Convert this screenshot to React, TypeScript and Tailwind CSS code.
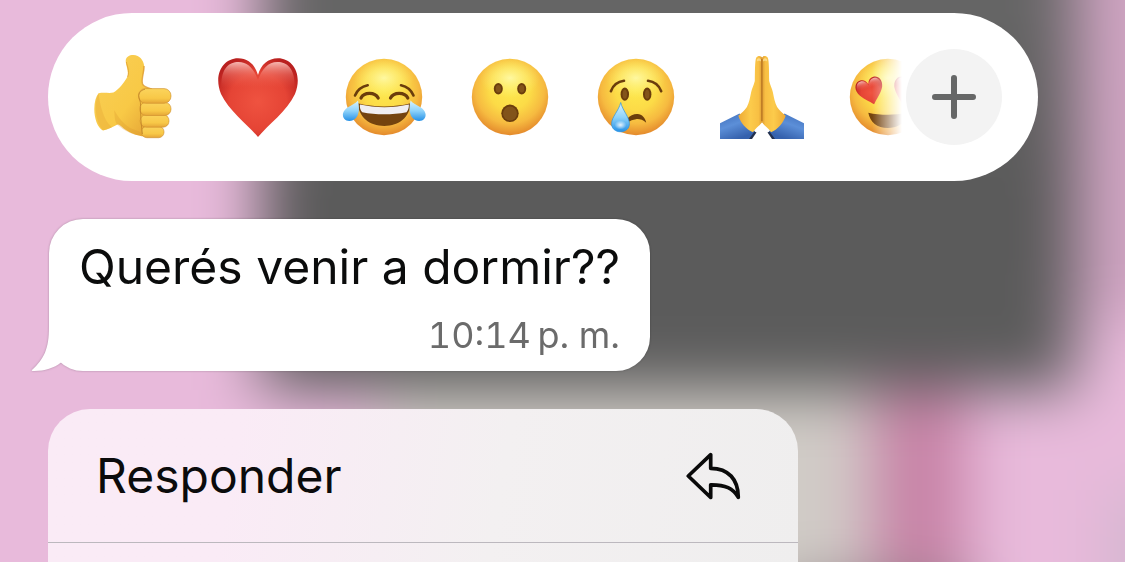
import type { ReactNode } from "react";

const FACE = "url(#face)";
const BROWN = "#6b3d0c";

function Emoji({ children }: { children: ReactNode }) {
  return (
    <svg viewBox="0 0 84 84" className="size-[84px]" aria-hidden="true">
      {children}
    </svg>
  );
}

function Face() {
  return (
    <>
      <circle cx="42" cy="42" r="38.2" fill={FACE} />
      <ellipse cx="42" cy="23" rx="30" ry="20" fill="url(#gloss)" />
    </>
  );
}

function SharedPaints() {
  return (
    <svg className="absolute size-0" aria-hidden="true">
      <defs>
        <radialGradient id="face" cx="0.5" cy="0.4" r="0.6">
          <stop offset="0" stopColor="#fde94e" />
          <stop offset="0.45" stopColor="#fcdb47" />
          <stop offset="0.75" stopColor="#f6ba40" />
          <stop offset="1" stopColor="#e48a2c" />
        </radialGradient>
        <radialGradient id="gloss">
          <stop offset="0" stopColor="#fffcb0" stopOpacity="0.85" />
          <stop offset="1" stopColor="#fff27a" stopOpacity="0" />
        </radialGradient>
        <radialGradient id="heart" cx="0.5" cy="0.55" r="0.6">
          <stop offset="0" stopColor="#ef5340" />
          <stop offset="0.6" stopColor="#e54435" />
          <stop offset="1" stopColor="#b9201f" />
        </radialGradient>
        <linearGradient id="shine" x1="0" y1="0" x2="0" y2="1">
          <stop offset="0" stopColor="#ffd0ca" stopOpacity="0.85" />
          <stop offset="0.5" stopColor="#f78a7d" stopOpacity="0.4" />
          <stop offset="1" stopColor="#f0604f" stopOpacity="0" />
        </linearGradient>
        <linearGradient id="tear" x1="0" y1="0" x2="0" y2="1">
          <stop offset="0" stopColor="#d9f3ff" />
          <stop offset="0.5" stopColor="#8fd3fa" />
          <stop offset="1" stopColor="#2590e6" />
        </linearGradient>
        <radialGradient id="tearShine">
          <stop offset="0" stopColor="#ffffff" stopOpacity="0.85" />
          <stop offset="1" stopColor="#ffffff" stopOpacity="0" />
        </radialGradient>
        <linearGradient id="skin" x1="0" y1="0" x2="1" y2="1">
          <stop offset="0" stopColor="#f9cf57" />
          <stop offset="0.6" stopColor="#f8c946" />
          <stop offset="1" stopColor="#e3a033" />
        </linearGradient>
        <linearGradient id="finger" x1="0" y1="0" x2="0" y2="1">
          <stop offset="0" stopColor="#fbd45c" />
          <stop offset="0.65" stopColor="#f8c847" />
          <stop offset="1" stopColor="#e5a637" />
        </linearGradient>
        <linearGradient id="palmLeft" x1="0" y1="0" x2="1" y2="0">
          <stop offset="0" stopColor="#eda935" />
          <stop offset="0.5" stopColor="#fccb4b" />
          <stop offset="0.85" stopColor="#f8bf43" />
          <stop offset="1" stopColor="#db9730" />
        </linearGradient>
        <linearGradient id="sleeve" x1="0" y1="0" x2="0.5" y2="1">
          <stop offset="0" stopColor="#3e6dba" />
          <stop offset="0.5" stopColor="#5c8fd8" />
          <stop offset="1" stopColor="#3561ad" />
        </linearGradient>
      </defs>
    </svg>
  );
}

function ThumbsUp() {
  return (
    <Emoji>
      <path
        d="M8.5 38.2C14 37.2 19 38.4 23.4 37.6C29 34 34 28 37.5 21.5C39 17 35.8 10 35.7 6C35.8 2 39.5 0 43.5 0.1C49.5 0.5 53.5 5 54.2 11C54.6 17.5 51 23.5 52.5 28.8C54 32.5 58 33 62 34L58 81.8C50 81.6 41 79 34 73.8C31.5 71.5 29.5 68.8 27.5 69.5C23 72 18 74.5 13 75.5C7.5 73 4.2 63 4.3 54C4.4 47 5.8 41.5 8.5 38.2Z"
        fill="url(#skin)"
      />
      <path d="M8.5 38.5C4.5 46 4 65 13 75.3C16 75 19 73.5 22 72.3C13 65 10 49 8.5 38.5Z" fill="#e8ac3a" opacity="0.45" />
      <path d="M27 69.5C24 65 25 59 24 55C28 61 31 67 40 73L58 80C45 82 36 77 27 69.5Z" fill="#dc9930" opacity="0.3" />
      <path d="M36.4 7C37 11 40 16 37.6 22" fill="none" stroke="#dd9a30" strokeWidth="1" opacity="0.7" />
      <path d="M54 11C54.3 17.5 51 23.5 52.5 28.8C54 32.5 58 33 62 34" fill="none" stroke="#dd9a30" strokeWidth="1.4" opacity="0.8" />
      <rect x="51.5" y="71.3" width="22.5" height="11.4" rx="5.4" fill="url(#finger)" stroke="#cc8b2b" strokeWidth="0.6" />
      <rect x="50.2" y="59.6" width="28.8" height="12.6" rx="6" fill="url(#finger)" stroke="#cc8b2b" strokeWidth="0.6" />
      <rect x="49.8" y="47.3" width="31.2" height="13.2" rx="6.3" fill="url(#finger)" stroke="#cc8b2b" strokeWidth="0.6" />
      <rect x="48.5" y="33.6" width="32.5" height="14.7" rx="7" fill="url(#finger)" stroke="#cc8b2b" strokeWidth="0.6" />
      <path d="M55 34.2C50 35.5 47.5 39 49.5 44C51.5 49 50 54 50.7 59C51 66 51.5 73 52.5 79" fill="none" stroke="#b97a24" strokeWidth="1" opacity="0.7" />
    </Emoji>
  );
}

function HeartShape() {
  return (
    <>
      <path d="M42 82C32 70 13 56 5 39C-3 19 7.5 3.3 22 3.3C32 3.3 39 9.5 42 20C45 9.5 52 3.3 62 3.3C76.5 3.3 87 19 79 39C71 56 52 70 42 82Z" fill="url(#heart)" />
      <path d="M5.5 33C4.5 14 12.5 7 22.5 7C32 7 38 14 42 25C46 14 52 7 61.5 7C71.5 7 79.5 14 78.5 33Z" fill="url(#shine)" />
    </>
  );
}

function Joy() {
  return (
    <Emoji>
      <Face />
      <path d="M13 40.5C15.5 34.5 20 31.5 25.7 30.3M59 30.3C64.5 31.5 69 34.5 71.5 40.5" fill="none" stroke={BROWN} strokeWidth="2.6" strokeLinecap="round" />
      <path d="M19 43C22 36.8 33 36.8 36.2 43M48.5 43C51.7 36.8 62.7 36.8 65.8 43" fill="none" stroke={BROWN} strokeWidth="3.2" strokeLinecap="round" />
      <path d="M16 48.3C31 52.5 53 52.5 68.5 48.3C68 62 57 71 42.3 71C27.5 71 16.5 62 16 48.3Z" fill="#74430e" />
      <path d="M18 49.6C33 53 52 53 66.8 49.6C67.2 52 66 56 64.5 57.3C50 60 34 60 20.3 57.3C18.5 56 17.5 52 18 49.6Z" fill="#f0eef1" />
      <path d="M16 45.5C17.5 53 17.3 58 14.7 62C11.5 66.8 5 67.2 2.2 63.8C-1 59.5 2 54.5 6.5 52C10 50 13.5 48.3 16 45.5Z" fill="url(#tear)" />
      <path d="M68.5 45.5C67 53 67.2 58 69.8 62C73 66.8 79.5 67.2 82.3 63.8C85.5 59.5 82.5 54.5 78 52C74.5 50 71 48.3 68.5 45.5Z" fill="url(#tear)" />
    </Emoji>
  );
}

function Astonished() {
  return (
    <Emoji>
      <Face />
      <ellipse cx="30.3" cy="33.8" rx="4.5" ry="5.7" fill={BROWN} />
      <ellipse cx="53.7" cy="33.8" rx="4.5" ry="5.7" fill={BROWN} />
      <ellipse cx="30.3" cy="33.8" rx="2.6" ry="3.8" fill="#83541a" />
      <ellipse cx="53.7" cy="33.8" rx="2.6" ry="3.8" fill="#83541a" />
      <circle cx="42" cy="58.3" r="8.7" fill={BROWN} />
      <circle cx="42" cy="58.6" r="7" fill="#82531a" />
    </Emoji>
  );
}

function Crying() {
  return (
    <Emoji>
      <Face />
      <ellipse cx="30.8" cy="39.2" rx="4.2" ry="6.6" fill={BROWN} />
      <ellipse cx="53.2" cy="39.2" rx="4.2" ry="6.6" fill={BROWN} />
      <ellipse cx="30.8" cy="39.2" rx="2.2" ry="4.5" fill="#83541a" />
      <ellipse cx="53.2" cy="39.2" rx="2.2" ry="4.5" fill="#83541a" />
      <path d="M16.9 36.2C19 30.5 24 26.5 30 25.8M54 25.8C60 26.5 65 30.5 67.2 36.2" fill="none" stroke={BROWN} strokeWidth="2.6" strokeLinecap="round" />
      <path d="M33 64C36 60.5 40 58.8 43.5 59C48 59.2 51.5 63 52.2 67.8C49 64.8 45 63.8 42 64.2C39 64.5 36 65.8 34 67Z" fill={BROWN} />
      <path d="M26.7 47.5C28.5 55.5 35.4 62 35.4 68.7C35.4 73.6 31.5 76.8 26.5 76.8C21.5 76.8 17.6 73.6 17.6 68.7C17.6 62 25 55.5 26.7 47.5Z" fill="url(#tear)" stroke="#2a94e4" strokeWidth="0.7" />
      <ellipse cx="26.5" cy="70" rx="6" ry="4.5" fill="url(#tearShine)" />
    </Emoji>
  );
}

function PrayingHalf() {
  return (
    <>
      <path d="M0 68.3L19.5 58.5L35 76.5L31 84H0Z" fill="url(#sleeve)" />
      <path d="M29 84L34.5 76.5L36.5 77.5L32 84Z" fill="#22304f" />
      <path
        d="M42.3 3C41.2 0.7 37.8 0.3 36.2 2.8C34.8 6 35 18 34.8 26C33.8 30.5 32 33 31.2 37C30 42.5 29.3 47.5 26.9 52C24.5 55.8 21.5 57.8 18.3 60.8C20.5 67.5 26 74.5 33 77.2C35 73.5 39 71.3 42.3 67Z"
        fill="url(#palmLeft)"
      />
      <path d="M36.9 4.5C38 2.8 40 2.8 41 4.5V6.5C40 5.6 38 5.6 36.9 6.5Z" fill="#ffe5a0" opacity="0.7" />
      <path d="M42 4V66" stroke="#a8671c" strokeWidth="0.8" />
    </>
  );
}

function Praying() {
  return (
    <Emoji>
      <PrayingHalf />
      <g transform="translate(84 0) scale(-1 1)">
        <PrayingHalf />
      </g>
    </Emoji>
  );
}

function HeartEyes() {
  return (
    <Emoji>
      <Face />
      <g transform="translate(10 22) rotate(-16 14 14) scale(0.34)">
        <HeartShape />
      </g>
      <g transform="translate(46 22) rotate(16 14 14) scale(0.34)">
        <HeartShape />
      </g>
      <path d="M22.3 57.7C34 60.5 50 60.5 61.7 57.7C60 67 53 73 42 73C31 73 24 67 22.3 57.7Z" fill="#74430e" />
    </Emoji>
  );
}

const reactions = [
  { name: "Me gusta", icon: <ThumbsUp /> },
  { name: "Corazón", icon: <Emoji><HeartShape /></Emoji> },
  { name: "Risa", icon: <Joy /> },
  { name: "Asombro", icon: <Astonished /> },
  { name: "Tristeza", icon: <Crying /> },
  { name: "Gracias", icon: <Praying /> },
  { name: "Enamorado", icon: <HeartEyes /> },
];

function Wallpaper() {
  return (
    <svg
      className="absolute inset-0 -z-10 size-full"
      viewBox="0 0 1125 562"
      preserveAspectRatio="none"
      aria-hidden="true"
    >
      <defs>
        <filter
          id="soft"
          filterUnits="userSpaceOnUse"
          x="-200"
          y="-200"
          width="1525"
          height="962"
          colorInterpolationFilters="sRGB"
        >
          <feGaussianBlur stdDeviation="31 30" />
        </filter>
        <linearGradient id="shade" x1="0" y1="0" x2="0" y2="1">
          <stop offset="0.2" stopColor="#666666" />
          <stop offset="0.6" stopColor="#5a5a5a" />
          <stop offset="1" stopColor="#5c5c5c" />
        </linearGradient>
      </defs>
      <rect width="1125" height="562" fill="#e8badb" />
      <g filter="url(#soft)">
        <rect x="-150" y="-150" width="1425" height="862" fill="#e8badb" />
        <rect x="380" y="370" width="490" height="330" fill="#d0cbc6" />
        <rect x="875" y="370" width="90" height="330" fill="#c680a4" />
        <rect x="1110" y="490" width="180" height="210" fill="#d3b6cf" />
        <rect x="780" y="585" width="190" height="100" fill="#85787d" />
        <rect x="1060" y="-100" width="220" height="420" fill="#cfa4c2" />
        <rect x="262" y="-100" width="813" height="490" fill="url(#shade)" />
      </g>
    </svg>
  );
}

function ReactionBar() {
  return (
    <section
      aria-label="Reacciones"
      className="flex items-center rounded-full bg-white py-9 pr-9 pl-[42px]"
    >
      <ul className="flex min-w-0 flex-1 gap-[42px] overflow-hidden [mask-image:linear-gradient(to_right,black_calc(100%-34px),transparent_calc(100%-4px))]">
        {reactions.map(({ name, icon }) => (
          <li key={name} className="shrink-0">
            <button type="button" aria-label={name} className="block">
              {icon}
            </button>
          </li>
        ))}
      </ul>
      <button
        type="button"
        aria-label="Más reacciones"
        className="flex size-24 shrink-0 items-center justify-center rounded-full bg-[#f3f3f3]"
      >
        <svg viewBox="0 0 44 44" className="size-11" aria-hidden="true">
          <path d="M22 3V41M3 22H41" stroke="#666767" strokeWidth="6" strokeLinecap="round" />
        </svg>
      </button>
    </section>
  );
}

function MessageBubble() {
  return (
    <article className="relative mt-[38px] ml-px flex flex-col self-start rounded-[34px] bg-white px-[30px] pt-[18px] pb-[14px] drop-shadow-[0_0_1px_rgba(0,0,0,0.25)]">
      <svg viewBox="0 0 40 50" className="absolute bottom-0 -left-[18px] h-[50px] w-10" aria-hidden="true">
        <path d="M18 0V6C18 28 13 38 1 49C0.3 49.7 0.8 50 3 50C14 50 23 47 30 41.5L40 30V0Z" fill="#ffffff" />
      </svg>
      <p className="text-[48px] leading-[60px] text-[#0b0c0c]">Querés venir a dormir??</p>
      <time dateTime="22:14" className="mt-4 self-end text-[36px] leading-[44px] text-[#6b6b6b] tabular-nums">
        10:14{"\u2009"}p. m.
      </time>
    </article>
  );
}

function ContextMenu() {
  return (
    <nav
      aria-label="Opciones del mensaje"
      className="mt-[38px] w-[750px] max-w-full flex-1 rounded-t-[42px] bg-linear-100 from-[#faebf6] from-25% via-[#f3f0f1] via-60% to-[#efeeee]"
    >
      <button
        type="button"
        className="flex h-[134px] w-full items-center justify-between border-b border-[#bcb8be] pr-[57px] pl-12 text-left text-[48px] leading-[60px] text-[#0b0b0c]"
      >
        Responder
        <svg viewBox="0 0 55 48" className="h-12 w-[55px]" aria-hidden="true">
          <path
            d="M2.3 24L24.7 2.7V16.3C42.5 16.3 52.3 27.5 52.3 45.3C47 36.5 39.5 32.6 24.7 32.8V45.5Z"
            fill="none"
            stroke="#0a0a0a"
            strokeWidth="3.7"
            strokeLinejoin="round"
          />
        </svg>
      </button>
    </nav>
  );
}

export default function App() {
  return (
    <main className="relative isolate flex min-h-screen flex-col overflow-hidden pt-[13px] pr-[87px] pl-12 font-['Inter',sans-serif]">
      <Wallpaper />
      <SharedPaints />
      <ReactionBar />
      <MessageBubble />
      <ContextMenu />
    </main>
  );
}
